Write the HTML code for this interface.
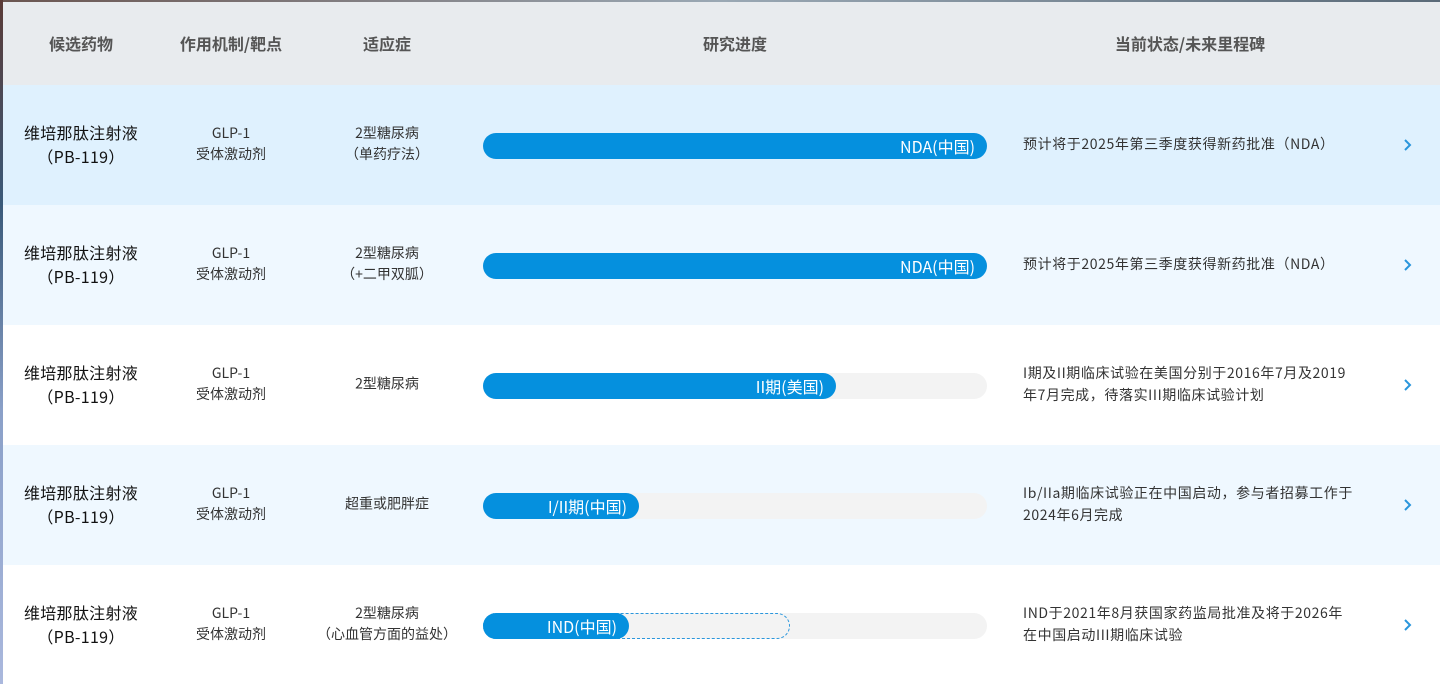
<!DOCTYPE html>
<html><head><meta charset="utf-8"><style>
*{margin:0;padding:0;box-sizing:border-box}
body{width:1440px;height:684px;overflow:hidden;background:#fff;font-family:"Noto Sans CJK SC","Liberation Sans",sans-serif;position:relative}
.ls{position:absolute;left:0;top:0;width:3px;height:684px;background:linear-gradient(#5a3a36,#3a5a7a 30%,#8aa0c8 60%,#aab8dd)}
.ts{position:absolute;left:0;top:0;width:1440px;height:2px;background:linear-gradient(90deg,#6a5550,#9aa8b4 50%,#5a6a78)}
.hd{position:absolute;left:3px;top:2px;width:1437px;height:83px;background:#e8ebee;font-weight:bold;font-size:16px;color:#555}
.hd span{position:absolute;top:30px;line-height:22px;transform:translateX(-50%);white-space:nowrap}
.row{position:absolute;left:3px;width:1437px;height:120px}
.c{position:absolute;transform:translate(-50%,-50%);text-align:center;white-space:nowrap;top:59px}
.n{left:78px;font-size:16px;color:#111;line-height:24px;letter-spacing:.3px}
.m{left:228px;font-size:14px;color:#333;line-height:21px}
.i{left:384px;font-size:14px;color:#333;line-height:21px}
.bar{position:absolute;left:480px;top:48px;width:504px;height:26px;border-radius:13px;background:#f3f3f3}
.f{position:absolute;left:0;top:0;height:26px;border-radius:13px;background:#0590de;color:#fff;font-size:16px;text-align:right;padding-right:12px;line-height:26px}
.dash{position:absolute;left:0;top:0;height:26px;border-radius:13px;border:1px dashed #2a96dc}
.s{position:absolute;left:1020px;top:59px;transform:translateY(-50%);font-size:14px;letter-spacing:.6px;color:#333;line-height:22px;width:360px;white-space:nowrap}
.ch{position:absolute;left:1399px;top:53px}
</style></head><body>
<div class="ts"></div>
<div class="hd"><span style="left:78px">候选药物</span><span style="left:228px">作用机制/靶点</span><span style="left:384px">适应症</span><span style="left:732px">研究进度</span><span style="left:1187px">当前状态/未来里程碑</span></div>

<div class="row" style="top:85px;background:#dff1fe">
<div class="c n">维培那肽注射液<br>（PB-119）</div><div class="c m">GLP-1<br>受体激动剂</div><div class="c i">2型糖尿病<br>（单药疗法）</div>
<div class="bar"><div class="f" style="width:504px">NDA(中国)</div></div>
<div class="s">预计将于2025年第三季度获得新药批准（NDA）</div>
<svg class="ch" width="12" height="14" viewBox="0 0 12 14"><path d="M3 2l5 5-5 5" fill="none" stroke="#2a96dc" stroke-width="2"/></svg></div>

<div class="row" style="top:205px;background:#eff8ff">
<div class="c n">维培那肽注射液<br>（PB-119）</div><div class="c m">GLP-1<br>受体激动剂</div><div class="c i">2型糖尿病<br>（+二甲双胍）</div>
<div class="bar"><div class="f" style="width:504px">NDA(中国)</div></div>
<div class="s">预计将于2025年第三季度获得新药批准（NDA）</div>
<svg class="ch" width="12" height="14" viewBox="0 0 12 14"><path d="M3 2l5 5-5 5" fill="none" stroke="#2a96dc" stroke-width="2"/></svg></div>

<div class="row" style="top:325px;background:#fff">
<div class="c n">维培那肽注射液<br>（PB-119）</div><div class="c m">GLP-1<br>受体激动剂</div><div class="c i">2型糖尿病</div>
<div class="bar"><div class="f" style="width:353px">II期(美国)</div></div>
<div class="s">I期及II期临床试验在美国分别于2016年7月及2019<br>年7月完成，待落实III期临床试验计划</div>
<svg class="ch" width="12" height="14" viewBox="0 0 12 14"><path d="M3 2l5 5-5 5" fill="none" stroke="#2a96dc" stroke-width="2"/></svg></div>

<div class="row" style="top:445px;background:#eff8ff">
<div class="c n">维培那肽注射液<br>（PB-119）</div><div class="c m">GLP-1<br>受体激动剂</div><div class="c i">超重或肥胖症</div>
<div class="bar"><div class="f" style="width:156px">I/II期(中国)</div></div>
<div class="s">Ib/IIa期临床试验正在中国启动，参与者招募工作于<br>2024年6月完成</div>
<svg class="ch" width="12" height="14" viewBox="0 0 12 14"><path d="M3 2l5 5-5 5" fill="none" stroke="#2a96dc" stroke-width="2"/></svg></div>

<div class="row" style="top:565px;background:#fff">
<div class="c n">维培那肽注射液<br>（PB-119）</div><div class="c m">GLP-1<br>受体激动剂</div><div class="c i">2型糖尿病<br>（心血管方面的益处）</div>
<div class="bar"><div class="dash" style="width:307px"></div><div class="f" style="width:146px">IND(中国)</div></div>
<div class="s">IND于2021年8月获国家药监局批准及将于2026年<br>在中国启动III期临床试验</div>
<svg class="ch" width="12" height="14" viewBox="0 0 12 14"><path d="M3 2l5 5-5 5" fill="none" stroke="#2a96dc" stroke-width="2"/></svg></div>
<div class="ls"></div>
</body></html>
